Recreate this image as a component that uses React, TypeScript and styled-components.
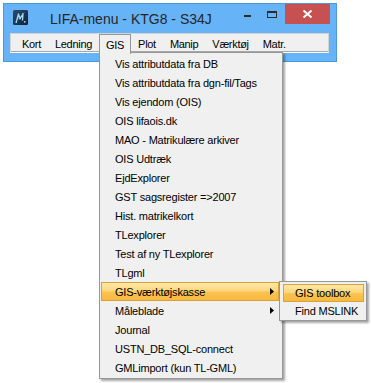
import React from "react";
import styled, { createGlobalStyle } from "styled-components";

//-----------Styled Components------------------

const GlobalStyle = createGlobalStyle`
  html, body {
    margin: 0;
    padding: 0;
    background: #ffffff;
  }
  body {
    font-family: "Liberation Sans", Arial, sans-serif;
  }
`;

const Page = styled.div`
  position: relative;
  width: 371px;
  height: 383px;
  overflow: hidden;
  padding: 3px 0 0 3px;
  box-sizing: border-box;
`;

const Window = styled.div`
  width: 334px;
  height: 59px;
  box-sizing: border-box;
  background: #66b3f8;
  border: 1px solid #4f97dc;
  display: flex;
  flex-direction: column;
`;

const TitleBar = styled.div`
  height: 29px;
  display: flex;
  align-items: flex-start;
`;

const AppIcon = styled.svg`
  margin: 6px 0 0 9px;
  flex: none;
`;

const Title = styled.div`
  margin: 7px 0 0 22px;
  font-size: 14px;
  line-height: 16px;
  color: #262626;
  flex: 1;
  white-space: nowrap;
`;

const CaptionButton = styled.div<{ $w: number; $close?: boolean }>`
  width: ${(p) => p.$w}px;
  height: 20px;
  display: flex;
  justify-content: center;
  background: ${(p) => (p.$close ? "#c75050" : "transparent")};
  margin-right: ${(p) => (p.$close ? 6 : 0)}px;
`;

const MinDash = styled.div`
  width: 7px;
  height: 2px;
  margin-top: 11px;
  background: #2b2b2b;
`;

const MaxBox = styled.div`
  width: 10px;
  height: 7px;
  box-sizing: border-box;
  margin-top: 7px;
  border: 1px solid #2b2b2b;
  border-top-width: 2px;
`;

const MenuBar = styled.div`
  height: 20px;
  margin: 0 7px 0 6px;
  box-sizing: border-box;
  background: #f0f0f0;
  border: 1px solid #d4d4d4;
  border-bottom: 1px solid #ffffff;
  box-shadow: inset 0 -1px 0 #a8a8a8;
  display: flex;
  align-items: stretch;
  padding-left: 4px;
`;

const BarItem = styled.div<{ $open?: boolean }>`
  position: relative;
  z-index: ${(p) => (p.$open ? 3 : 0)};
  display: flex;
  align-items: center;
  padding: 0 6px;
  margin-bottom: ${(p) => (p.$open ? -2 : 0)}px;
  font-size: 11px;
  letter-spacing: -0.3px;
  color: #000;
  border: 1px solid ${(p) => (p.$open ? "#979797" : "transparent")};
  border-bottom: none;
  background: ${(p) => (p.$open ? "#f0f0f0" : "transparent")};
`;

const Dropdown = styled.div`
  position: absolute;
  left: 99px;
  top: 52px;
  width: 184px;
  box-sizing: border-box;
  padding: 1px 3px 1px 1px;
  background: #f0f0f0;
  border: 1px solid #979797;
  box-shadow: 2px 2px 2px rgba(0, 0, 0, 0.35);
  z-index: 2;
`;

const SubMenu = styled.div`
  position: absolute;
  left: 279px;
  top: 281px;
  width: 88px;
  box-sizing: border-box;
  padding: 2px 2px 0 3px;
  background: #f0f0f0;
  border: 1px solid #979797;
  box-shadow: 2px 2px 2px rgba(0, 0, 0, 0.35);
  z-index: 4;
`;

const Item = styled.div<{ $active?: boolean; $h: number; $indent: number }>`
  height: ${(p) => p.$h}px;
  box-sizing: border-box;
  display: flex;
  align-items: center;
  justify-content: space-between;
  padding: 0 4px 0 ${(p) => p.$indent}px;
  font-size: 11px;
  letter-spacing: -0.2px;
  color: #000;
  white-space: nowrap;
  border: 1px solid ${(p) => (p.$active ? "#d9a13c" : "transparent")};
  background: ${(p) =>
    p.$active
      ? "linear-gradient(#fee8a6 0%, #fdd77f 45%, #fac24f 55%, #f9b93f 100%)"
      : "transparent"};
`;

const Arrow = styled.svg`
  flex: none;
`;

//==============================================

const items: { label: string; sub?: boolean; active?: boolean }[] = [
  { label: "Vis attributdata fra DB" },
  { label: "Vis attributdata fra dgn-fil/Tags" },
  { label: "Vis ejendom (OIS)" },
  { label: "OIS lifaois.dk" },
  { label: "MAO - Matrikulære arkiver" },
  { label: "OIS Udtræk" },
  { label: "EjdExplorer" },
  { label: "GST sagsregister =>2007" },
  { label: "Hist. matrikelkort" },
  { label: "TLexplorer" },
  { label: "Test af ny TLexplorer" },
  { label: "TLgml" },
  { label: "GIS-værktøjskasse", sub: true, active: true },
  { label: "Måleblade", sub: true },
  { label: "Journal" },
  { label: "USTN_DB_SQL-connect" },
  { label: "GMLimport (kun TL-GML)" },
];

const barItems = ["Kort", "Ledning", "GIS", "Plot", "Manip", "Værktøj", "Matr."];

function LifaIcon() {
  return (
    <AppIcon width="15" height="15" viewBox="0 0 15 15">
      <defs>
        <linearGradient id="ic" x1="0" y1="0" x2="1" y2="1">
          <stop offset="0" stopColor="#2c4d70" />
          <stop offset="1" stopColor="#0f2038" />
        </linearGradient>
      </defs>
      <rect x="0" y="0" width="15" height="15" rx="1.5" fill="url(#ic)" />
      <path
        d="M3 13 L5.5 4 L7 9 L10 3.5 L9.5 10.5"
        fill="none"
        stroke="#a9dcf7"
        strokeWidth="1.3"
        strokeLinejoin="round"
      />
      <path d="M2.5 11.5 L11.5 2.5" stroke="#5fa9dd" strokeWidth="0.7" opacity="0.7" />
      <circle cx="11.8" cy="11.8" r="0.9" fill="#a9dcf7" />
    </AppIcon>
  );
}

function SubArrow() {
  return (
    <Arrow width="4" height="7" viewBox="0 0 4 7">
      <polygon points="0,0 4,3.5 0,7" fill="#000" />
    </Arrow>
  );
}

export default function App() {
  return (
    <Page>
      <GlobalStyle />
      <Window>
        <TitleBar>
          <LifaIcon />
          <Title>LIFA-menu - KTG8 - S34J</Title>
          <CaptionButton $w={24}>
            <MinDash />
          </CaptionButton>
          <CaptionButton $w={26}>
            <MaxBox />
          </CaptionButton>
          <CaptionButton $w={45} $close>
            <svg width="45" height="20" viewBox="0 0 45 20">
              <path
                d="M18.5 6.5 L26.5 13.5 M26.5 6.5 L18.5 13.5"
                stroke="#ffffff"
                strokeWidth="2"
              />
            </svg>
          </CaptionButton>
        </TitleBar>
        <MenuBar>
          {barItems.map((b) => (
            <BarItem key={b} $open={b === "GIS"}>
              {b}
            </BarItem>
          ))}
        </MenuBar>
      </Window>

      <Dropdown>
        {items.map((it) => (
          <Item key={it.label} $h={19} $indent={13} $active={it.active}>
            <span>{it.label}</span>
            {it.sub && <SubArrow />}
          </Item>
        ))}
      </Dropdown>

      <SubMenu>
        <Item $h={18} $indent={11} $active>
          <span>GIS toolbox</span>
        </Item>
        <Item $h={18} $indent={11}>
          <span>Find MSLINK</span>
        </Item>
      </SubMenu>
    </Page>
  );
}
